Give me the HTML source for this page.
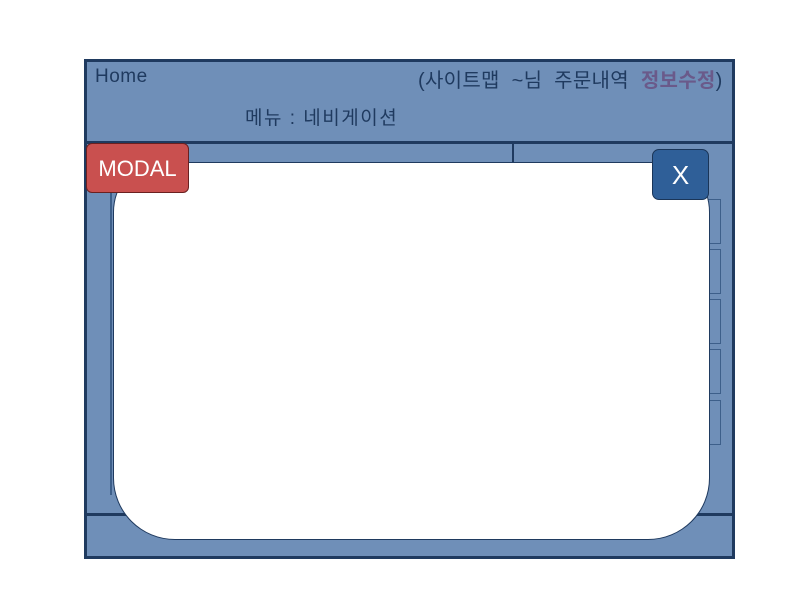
<!DOCTYPE html>
<html><head><meta charset="utf-8"><style>
body{margin:0;width:800px;height:600px;background:#fff;position:relative;overflow:hidden;font-family:"Liberation Sans","Noto Sans CJK KR",sans-serif}
.a{position:absolute;box-sizing:border-box}
</style></head><body>
<div class="a" style="left:84px;top:59px;width:651px;height:500px;background:#6f8fb8;border:3px solid #1f3a5f"></div>
<div class="a" style="left:86px;top:141px;width:647px;height:3px;background:#1f3a5f"></div>
<div class="a" style="left:86px;top:513px;width:647px;height:3px;background:#1f3a5f"></div>
<div class="a" style="left:512px;top:143px;width:2px;height:20px;background:#1f3a5f"></div>
<div class="a" style="left:110px;top:170px;width:2px;height:325px;background:#3d5f8a"></div>
<div class="a" style="left:707px;top:199px;width:14px;height:45px;border:1px solid #3d5f8a"></div>
<div class="a" style="left:707px;top:249px;width:14px;height:45px;border:1px solid #3d5f8a"></div>
<div class="a" style="left:707px;top:299px;width:14px;height:45px;border:1px solid #3d5f8a"></div>
<div class="a" style="left:707px;top:349px;width:14px;height:45px;border:1px solid #3d5f8a"></div>
<div class="a" style="left:707px;top:400px;width:14px;height:45px;border:1px solid #3d5f8a"></div>
<div class="a" style="left:95px;top:66px;font-size:19px;color:#1f3a5f;letter-spacing:0.5px">Home</div>
<div class="a" style="left:418px;top:64px;font-size:20px;color:#1f3a5f;white-space:nowrap;letter-spacing:0.3px;word-spacing:6px">(사이트맵 ~님 주문내역 <b style="color:#6a5a8a">정보수정</b>)</div>
<div class="a" style="left:245px;top:103px;font-size:19px;color:#1f3a5f;letter-spacing:1.5px">메뉴 : 네비게이션</div>
<div class="a" style="left:113px;top:162px;width:597px;height:378px;background:#fff;border:1.5px solid #1f3a5f;border-radius:45px 45px 62px 62px / 50px 50px 62px 62px"></div>
<div class="a" style="left:86px;top:143px;width:103px;height:50px;background:#c9504f;border:1px solid #6a2020;border-radius:6px;color:#fff;font-size:22px;line-height:50px;text-align:center">MODAL</div>
<div class="a" style="left:652px;top:149px;width:57px;height:51px;background:#2f5f98;border:1px solid #1a3558;border-radius:7px;color:#fff;font-size:26px;line-height:51px;text-align:center">X</div>
</body></html>
